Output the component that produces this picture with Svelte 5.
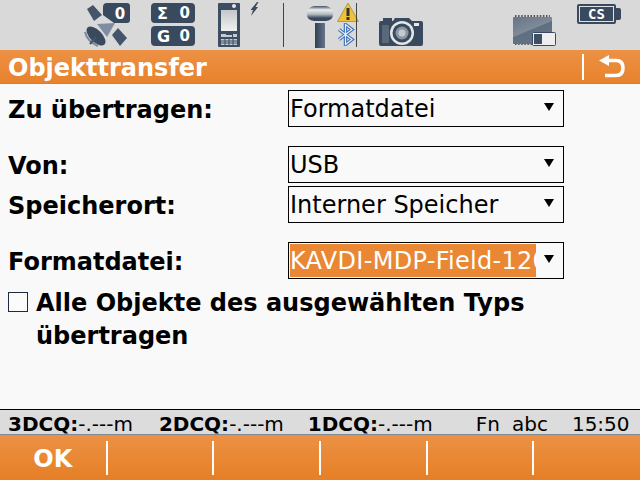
<script lang="ts">
	const softkeys = ['OK', '', '', '', '', ''];
</script>

<div class="screen">
	<header class="topbar">
		<!-- satellite with count badge -->
		<svg class="icon sat" width="46" height="45" viewBox="0 0 46 45">
			<path d="M19 4 Q19 0 23 0 L43 0 Q46 0 46 3 L46 17 Q46 20 43 20 L30 20 L19 12 Z" fill="#3a4a5e" />
			<text x="36" y="16" class="badge-text">0</text>
			<path d="M3 6 L9 2 L18 12 L10 18 Z" fill="#44546a" />
			<path d="M28 32 L34 25 L43 35 L36 43 Z" fill="#44546a" />
			<path d="M13 21 L31 20 L23 34 Z" fill="#7f8da0" />
			<ellipse cx="12" cy="33" rx="12" ry="6" transform="rotate(45 12 33)" fill="#3a4a5e" />
			<path d="M1 29 Q3 38 14 43" fill="none" stroke="#7b899a" stroke-width="2" />
			<path d="M6 41 L12 34" stroke="#44546a" stroke-width="2" />
		</svg>

		<div class="counters">
			<div class="counter"><span class="letter">Σ</span><span>0</span></div>
			<div class="counter"><span class="letter">G</span><span>0</span></div>
		</div>

		<!-- controller -->
		<svg class="icon phone" width="22" height="44" viewBox="0 0 22 44">
			<defs>
				<linearGradient id="lcd" x1="0" y1="0" x2="0" y2="1">
					<stop offset="0" stop-color="#c4c7ca" />
					<stop offset="1" stop-color="#f0f0f0" />
				</linearGradient>
			</defs>
			<rect x="0" y="0" width="22" height="44" rx="1" fill="#3d4d62" />
			<circle cx="16" cy="3" r="2" fill="#e8e8e8" />
			<rect x="3" y="7" width="16" height="21" fill="url(#lcd)" />
			<path d="M3 31h5v3h-5zM8 32h6v2h-6zM15 31h4v3h-4z" fill="#c8ccd0" />
			<path d="M3 36h16v6h-16z" fill="#c8ccd0" />
			<path d="M3 38h16M3 40h16M7 36v6M11 36v6M15 36v6" stroke="#3d4d62" stroke-width="1" />
		</svg>
		<svg class="icon bolt" width="9" height="14" viewBox="0 0 9 14">
			<path d="M7 0 L8.5 0 L5.5 5 L8 5 L1 14 L3 8 L0.5 8 Z" fill="#3a4a5e" />
		</svg>

		<div class="divider first"></div>

		<!-- GNSS antenna on pole -->
		<svg class="icon antenna" width="26" height="42" viewBox="0 0 26 42">
			<defs>
				<linearGradient id="dome" x1="0" y1="0" x2="0" y2="1">
					<stop offset="0" stop-color="#3f4f63" />
					<stop offset="0.25" stop-color="#eceef0" />
					<stop offset="0.55" stop-color="#b4bac2" />
					<stop offset="0.8" stop-color="#3a4a5e" />
					<stop offset="1" stop-color="#3a4a5e" />
				</linearGradient>
				<linearGradient id="pole" x1="0" y1="0" x2="1" y2="0">
					<stop offset="0" stop-color="#2f3f55" />
					<stop offset="1" stop-color="#66758a" />
				</linearGradient>
			</defs>
			<path d="M0 9 Q0 1 7 0 L19 0 Q26 1 26 9 Q26 14 19 15 L7 15 Q0 14 0 9 Z" fill="url(#dome)" />
			<rect x="8" y="17" width="10" height="25" fill="url(#pole)" />
		</svg>
		<div class="status-stack">
			<svg width="22" height="20" viewBox="0 0 22 20">
				<path d="M11 1 L21.5 19.5 L0.5 19.5 Z" fill="#f0c23c" stroke="#b89a3c" stroke-width="1" />
				<rect x="9.5" y="6" width="3" height="8" fill="#333" />
				<rect x="9.5" y="15" width="3" height="3" fill="#333" />
			</svg>
			<svg class="bt" width="18" height="23" viewBox="0 0 18 23">
				<path d="M2 6.5 L15 16.5 L8.5 21.5 L8.5 1.5 L15 6.5 L2 16.5" fill="none" stroke="#3f6fb5" stroke-width="3.4" />
				<path d="M2 6.5 L15 16.5 L8.5 21.5 L8.5 1.5 L15 6.5 L2 16.5" fill="none" stroke="#e8eef6" stroke-width="1.2" />
			</svg>
		</div>

		<div class="divider second"></div>

		<!-- camera -->
		<svg class="icon camera" width="44" height="31" viewBox="0 0 44 31">
			<path d="M4 2 h9 v3 h-9 z" fill="#3a4a5e" />
			<path d="M0 7 Q0 5 2 5 L14 5 L16 2 L30 2 L33 5 L42 5 Q44 5 44 7 L44 28 Q44 30 42 30 L2 30 Q0 30 0 28 Z" fill="#3a4a5e" />
			<rect x="35" y="7" width="5" height="3" fill="#e8e8e8" />
			<rect x="3" y="9" width="7" height="18" fill="#59687b" />
			<circle cx="23" cy="17" r="12" fill="#e4e6e8" />
			<circle cx="23" cy="17" r="9.5" fill="#3a4a5e" />
			<circle cx="23" cy="17" r="6.5" fill="#8a95a2" />
			<circle cx="23" cy="17" r="3.5" fill="#c5cad0" />
		</svg>

		<div class="spacer"></div>

		<!-- internal memory chip + toggle -->
		<div class="chip">
			<svg width="44" height="32" viewBox="0 0 44 32">
				<defs>
					<linearGradient id="chipfill" x1="0.2" y1="0" x2="0.8" y2="1">
						<stop offset="0" stop-color="#6a7888" />
						<stop offset="0.45" stop-color="#7f8b99" />
						<stop offset="0.47" stop-color="#5f6f82" />
						<stop offset="1" stop-color="#657486" />
					</linearGradient>
				</defs>
				<path d="M3 1h35M3 29h35" stroke="#555" stroke-width="2" stroke-dasharray="1.5 1.6" />
				<rect x="1" y="2" width="39" height="27" rx="1" fill="url(#chipfill)" />
				<rect x="20.5" y="17.5" width="23" height="13" rx="1" fill="#eeeeee" stroke="#3a4a5e" />
				<rect x="22" y="19" width="8" height="10" fill="#3f4f63" />
			</svg>
		</div>

		<div class="battery-wrap">
			<div class="battery"><span>CS</span></div>
			<div class="battery-tip"></div>
		</div>
	</header>

	<div class="titlebar">
		<h1>Objekttransfer</h1>
		<div class="title-sep"></div>
		<svg class="back" width="26" height="26" viewBox="0 0 26 26">
			<path d="M9 6.5 H17 Q24 6.5 24 14 Q24 21.5 17 21.5 H6" fill="none" stroke="#fff" stroke-width="3.6" />
			<path d="M10 1 L10 12 L0 6.5 Z" fill="#fff" />
		</svg>
	</div>

	<main class="content">
		<div class="row">
			<span class="label">Zu übertragen:</span>
			<div class="select"><span class="value">Formatdatei</span><span class="caret"></span></div>
		</div>
		<div class="row gap-row">
			<span class="label">Von:</span>
			<div class="select"><span class="value">USB</span><span class="caret"></span></div>
		</div>
		<div class="row tight-row">
			<span class="label">Speicherort:</span>
			<div class="select"><span class="value">Interner Speicher</span><span class="caret"></span></div>
		</div>
		<div class="row gap-row">
			<span class="label">Formatdatei:</span>
			<div class="select">
				<span class="value selected">KAVDI-MDP-Field-120</span><span class="caret"></span>
			</div>
		</div>
		<div class="check-row">
			<span class="checkbox"></span>
			<span class="label">Alle Objekte des ausgewählten Typs<br />übertragen</span>
		</div>
	</main>

	<div class="statusbar">
		<span class="cq"><b>3DCQ:</b>-.---m</span>
		<span class="cq second-cq"><b>2DCQ:</b>-.---m</span>
		<span class="cq third-cq"><b>1DCQ:</b>-.---m</span>
		<span class="fn">Fn</span>
		<span class="abc">abc</span>
		<span class="clock">15:50</span>
	</div>

	<footer class="softkeys">
		{#each softkeys as key}
			<div class="softkey"><span>{key}</span></div>
		{/each}
	</footer>
</div>

<style>
	:global(body) {
		margin: 0;
	}

	.screen {
		width: 640px;
		height: 480px;
		display: flex;
		flex-direction: column;
		overflow: hidden;
		background: #f9f9f9;
		color: #000;
		font-family: "DejaVu Sans", sans-serif;
	}

	.topbar {
		height: 50px;
		flex-shrink: 0;
		display: flex;
		align-items: flex-start;
		background: #d9d9d9;
	}

	.icon {
		display: block;
		flex-shrink: 0;
	}

	.sat {
		margin: 3px 0 0 84px;
	}

	.badge-text {
		font-family: "DejaVu Sans", sans-serif;
		font-size: 15px;
		font-weight: 700;
		fill: #fff;
		text-anchor: middle;
	}

	.counters {
		margin: 3px 0 0 21px;
		display: flex;
		flex-direction: column;
		gap: 3px;
	}

	.counter {
		width: 44px;
		height: 20px;
		box-sizing: border-box;
		padding: 0 5px 0 6px;
		display: flex;
		justify-content: space-between;
		align-items: center;
		border-radius: 4px;
		background: #3a4a5e;
		color: #fff;
		font-size: 15px;
		font-weight: 700;
	}

	.letter {
		font-size: 16px;
	}

	.phone {
		margin: 3px 0 0 23px;
	}

	.bolt {
		margin: 2px 0 0 10px;
	}

	.divider {
		width: 1px;
		height: 44px;
		margin-top: 3px;
		background: #444;
		flex-shrink: 0;
	}

	.divider.first {
		margin-left: 24px;
	}

	.antenna {
		margin: 6px 0 0 23px;
	}

	.status-stack {
		display: flex;
		flex-direction: column;
		margin: 2px 0 0 4px;
		width: 22px;
	}

	.status-stack svg {
		display: block;
	}

	.bt {
		margin-top: 1px;
	}

	.divider.second {
		margin-left: -3px;
	}

	.camera {
		margin: 16px 0 0 22px;
	}

	.spacer {
		flex: 1;
	}

	.chip {
		margin-top: 15px;
		height: 32px;
	}

	.chip svg {
		display: block;
	}

	.battery-wrap {
		display: flex;
		align-items: center;
		margin: 4px 19px 0 21px;
	}

	.battery {
		width: 39px;
		height: 20px;
		box-sizing: border-box;
		border: 2px solid #3a4a5e;
		border-radius: 2px;
		background: #dfe1e3;
		padding: 1px 1px;
		display: flex;
	}

	.battery span {
		flex: 1;
		background: #3a4a5e;
		color: #fff;
		font-family: "DejaVu Sans Mono", monospace;
		font-size: 14px;
		font-weight: 700;
		line-height: 14px;
		padding-left: 8px;
	}

	.battery-tip {
		width: 5px;
		height: 12px;
		background: #3a4a5e;
		border-radius: 0 2px 2px 0;
	}

	.titlebar {
		height: 34px;
		flex-shrink: 0;
		display: flex;
		align-items: center;
		background: linear-gradient(#ec9144, #e8822c);
		border-bottom: 1px solid #8f8f8f;
		box-sizing: border-box;
		padding-left: 8px;
	}

	h1 {
		margin: 0;
		padding-top: 3px;
		flex: 1;
		color: #fff;
		font-size: 24px;
		font-weight: 700;
	}

	.title-sep {
		width: 2px;
		height: 26px;
		background: #fff;
	}

	.back {
		margin: 0 15px 0 15px;
		display: block;
	}

	.content {
		flex: 1;
		padding-top: 6px;
		display: flex;
		flex-direction: column;
	}

	.row {
		display: flex;
		align-items: center;
		height: 37px;
		padding-left: 8px;
	}

	.gap-row {
		margin-top: 19px;
	}

	.tight-row {
		margin-top: 3px;
	}

	.label {
		font-size: 24px;
		font-weight: 700;
		line-height: 33px;
	}

	.row .label {
		width: 280px;
		flex-shrink: 0;
		padding-top: 4px;
	}

	.select {
		width: 276px;
		height: 37px;
		box-sizing: border-box;
		border: 1px solid #000;
		padding: 1px;
		display: flex;
		align-items: stretch;
		background: #f9f9f9;
	}

	.value {
		width: 246px;
		box-sizing: border-box;
		padding-top: 2px;
		overflow: hidden;
		white-space: nowrap;
		font-size: 24px;
		line-height: 31px;
	}

	.selected {
		background: #e98734;
		color: #fff;
		letter-spacing: 0.3px;
	}

	.caret {
		width: 0;
		height: 0;
		margin: 11px 0 0 8px;
		border-left: 5px solid transparent;
		border-right: 5px solid transparent;
		border-top: 8px solid #000;
	}

	.check-row {
		display: flex;
		align-items: flex-start;
		padding: 8px 0 0 8px;
	}

	.checkbox {
		width: 20px;
		height: 20px;
		box-sizing: border-box;
		border: 1px solid #1d2b3d;
		background: #fbfbfb;
		margin: 5px 8px 0 0;
		flex-shrink: 0;
	}

	.statusbar {
		height: 26px;
		flex-shrink: 0;
		box-sizing: border-box;
		display: flex;
		align-items: center;
		background: #dcdcdc;
		border-top: 1px solid #000;
		border-bottom: 1px solid #7f8a96;
		padding: 3px 0 0 8px;
		font-size: 20px;
		white-space: nowrap;
	}

	.statusbar b {
		font-weight: 700;
	}

	.second-cq {
		margin-left: 26px;
	}

	.third-cq {
		margin-left: 24px;
	}

	.fn {
		margin-left: 43px;
	}

	.abc {
		margin-left: 12px;
	}

	.clock {
		margin-left: 24px;
	}

	.softkeys {
		height: 45px;
		flex-shrink: 0;
		display: grid;
		grid-template-columns: repeat(6, 1fr);
		background: linear-gradient(#ec9144, #e67f26);
		padding-top: 6px;
		padding-bottom: 5px;
		box-sizing: border-box;
	}

	.softkey {
		display: flex;
		align-items: center;
		justify-content: center;
		border-right: 2px solid #fff;
		margin-right: -1px;
		color: #fff;
		font-size: 24px;
		font-weight: 700;
	}

	.softkey span {
		padding-top: 2px;
	}

	.softkey:last-child {
		border-right: none;
		margin-right: 0;
	}
</style>
